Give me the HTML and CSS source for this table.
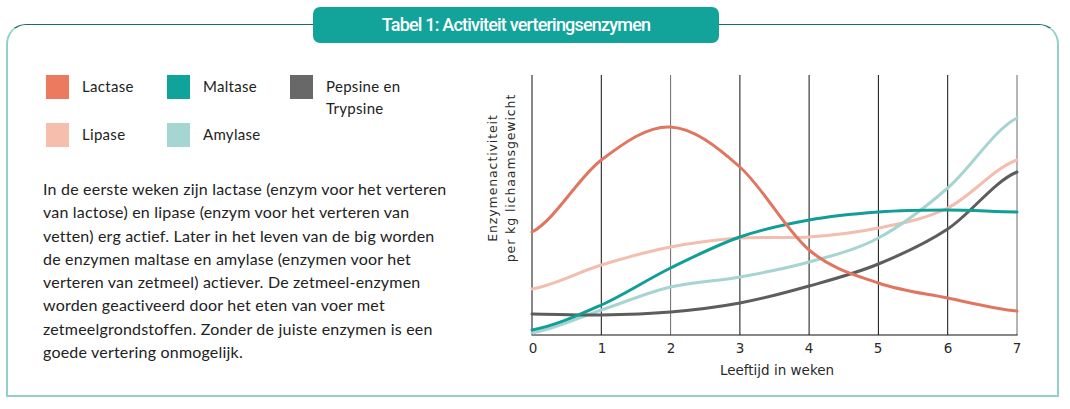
FILE: index.html
```html
<!DOCTYPE html>
<html lang="nl">
<head>
<meta charset="utf-8">
<title>Tabel 1: Activiteit verteringsenzymen</title>
<link rel="stylesheet" href="styles.css">
</head>
<body>
<section class="card">
  <h1 class="badge">Tabel 1: Activiteit verteringsenzymen</h1>
  <div class="left">
    <ul class="legend">
      <li class="item"><span class="sw lactase"></span><span>Lactase</span></li>
      <li class="item"><span class="sw maltase"></span><span>Maltase</span></li>
      <li class="item"><span class="sw pepsine"></span><span>Pepsine en<br>Trypsine</span></li>
      <li class="item"><span class="sw lipase"></span><span>Lipase</span></li>
      <li class="item"><span class="sw amylase"></span><span>Amylase</span></li>
    </ul>
    <p class="text">In de eerste weken zijn lactase (enzym voor het verteren<br>van lactose) en lipase (enzym voor het verteren van<br>vetten) erg actief. Later in het leven van de big worden<br>de enzymen maltase en amylase (enzymen voor het<br>verteren van zetmeel) actiever. De zetmeel-enzymen<br>worden geactiveerd door het eten van voer met<br>zetmeelgrondstoffen. Zonder de juiste enzymen is een<br>goede vertering onmogelijk.</p>
  </div>
  <svg class="chart" width="570" height="325" viewBox="470 60 570 325">
    <g class="grid">
      <line x1="532" y1="75" x2="532" y2="335"/>
      <line x1="601.3" y1="75" x2="601.3" y2="335"/>
      <line class="soft" x1="670.6" y1="75" x2="670.6" y2="335"/>
      <line x1="739.9" y1="75" x2="739.9" y2="335"/>
      <line x1="809.1" y1="75" x2="809.1" y2="335"/>
      <line x1="878.4" y1="75" x2="878.4" y2="335"/>
      <line x1="947.7" y1="75" x2="947.7" y2="335"/>
      <line class="soft" x1="1017" y1="75" x2="1017" y2="335"/>
      <line x1="531.5" y1="335" x2="1017.5" y2="335"/>
    </g>
    <g class="curves">
      <path class="c-lipase" d="M532 289 C555.1 285 578.2 272 601.3 265 C624.4 258 647.5 251.5 670.6 247 C693.7 242.5 716.8 239.7 739.9 238 C763 236.3 786 238.7 809.1 237 C832.2 235.3 855.3 232.8 878.4 228 C901.5 223.2 924.6 219.3 947.7 208 C970.8 196.7 993.9 168 1017 160"/>
      <path class="c-amylase" d="M532 333 C555.1 329.2 578.2 317.7 601.3 310 C624.4 302.3 647.5 292.5 670.6 287 C693.7 281.5 716.8 281.2 739.9 277 C763 272.8 786 268.5 809.1 262 C832.2 255.5 855.3 250.3 878.4 238 C901.5 225.7 924.6 208 947.7 188 C970.8 168 993.9 129.7 1017 118"/>
      <path class="c-pepsine" d="M532 314 C555.1 314.2 578.2 315.3 601.3 315 C624.4 314.7 647.5 314 670.6 312 C693.7 310 716.8 307.3 739.9 303 C763 298.7 786 292.5 809.1 286 C832.2 279.5 855.3 273.5 878.4 264 C901.5 254.5 924.6 244.3 947.7 229 C970.8 213.7 993.9 181.5 1017 172"/>
      <path class="c-maltase" d="M532 330 C555.1 325.8 578.2 315.3 601.3 305 C624.4 294.7 647.5 279.3 670.6 268 C693.7 256.7 716.8 245 739.9 237 C763 229 786 224.2 809.1 220 C832.2 215.8 855.3 213.7 878.4 212 C901.5 210.3 924.6 210 947.7 210 C970.8 210 993.9 211.7 1017 212"/>
      <path class="c-lactase" d="M532 232 C555.1 220 578.2 177.5 601.3 160 C624.4 142.5 647.5 125.8 670.6 127 C693.7 128.2 716.8 146.5 739.9 167 C763 187.5 786 230.7 809.1 250 C832.2 269.3 855.3 275 878.4 283 C901.5 291 924.6 293.3 947.7 298 C970.8 302.7 993.9 308.8 1017 311"/>
    </g>
    <g class="ticks">
      <text x="533" y="353">0</text>
      <text x="602" y="353">1</text>
      <text x="671" y="353">2</text>
      <text x="740" y="353">3</text>
      <text x="809" y="353">4</text>
      <text x="878" y="353">5</text>
      <text x="948" y="353">6</text>
      <text x="1017" y="353">7</text>
      <text x="777" y="375">Leeftijd in weken</text>
    </g>
    <g class="ylabel">
      <text transform="translate(497 178) rotate(-90)">Enzymenactiviteit</text>
      <text transform="translate(515 178) rotate(-90)">per kg lichaamsgewicht</text>
    </g>
  </svg>
</section>
</body>
</html>
```

FILE: styles.css
```css
* { box-sizing: border-box; }
html, body { margin: 0; padding: 0; background: #ffffff; }
body {
  font-family: "Lato", "Open Sans", sans-serif;
  color: #222222;
}
.card {
  position: relative;
  margin: 24px 0 0 6px;
  width: 1053px;
  height: 373px;
  border: 2px solid #92d0cc;
  border-top: 1.5px solid #1c6b69;
  border-radius: 20px 20px 0 0;
  display: flex;
  align-items: flex-start;
}
.badge {
  position: absolute;
  top: -18px;
  left: 305px;
  width: 406px;
  height: 36px;
  margin: 0;
  background: #12a39b;
  border-radius: 7px;
  color: #ffffff;
  font-family: "Roboto", sans-serif;
  font-weight: 500;
  font-size: 18px;
  letter-spacing: -0.8px;
  line-height: 36px;
  text-align: center;
}
.left {
  width: 462px;
  flex: none;
  padding: 50px 0 0 38px;
}
.legend {
  list-style: none;
  margin: 0;
  padding: 0;
  display: grid;
  grid-template-columns: 121px 123px 140px;
  grid-auto-rows: 48px;
}
.item {
  display: flex;
  align-items: flex-start;
  gap: 13px;
  font-size: 15px;
  letter-spacing: 0.3px;
  line-height: 22px;
}
.sw {
  flex: none;
  width: 23px;
  height: 24px;
}
.lactase { background: #ec7a5f; }
.maltase { background: #10a39b; }
.pepsine { background: #686868; }
.lipase { background: #f5bead; }
.amylase { background: #a6d6d2; }
.text {
  margin: 6px 0 0 -3px;
  width: 424px;
  white-space: nowrap;
  font-size: 16px;
  letter-spacing: 0.2px;
  line-height: 23.3px;
}
.chart {
  flex: none;
  margin-top: 34.5px;
  display: block;
}
.grid line { stroke: #111111; stroke-width: 1; }
.grid line.soft { stroke: #6b6b6b; }
.curves path { fill: none; stroke-width: 3; stroke-linecap: round; }
.c-lactase { stroke: #e07660; }
.c-maltase { stroke: #119e96; }
.c-pepsine { stroke: #5d5d5d; }
.c-lipase { stroke: #f3bdaf; }
.c-amylase { stroke: #a6d5d1; }
.ticks text {
  font-family: "DejaVu Sans", sans-serif;
  font-size: 13.5px;
  fill: #2a2a2a;
  text-anchor: middle;
}
.ylabel text {
  font-family: "DejaVu Sans", sans-serif;
  font-size: 12.5px;
  letter-spacing: 0.9px;
  fill: #2a2a2a;
  text-anchor: middle;
}
```
